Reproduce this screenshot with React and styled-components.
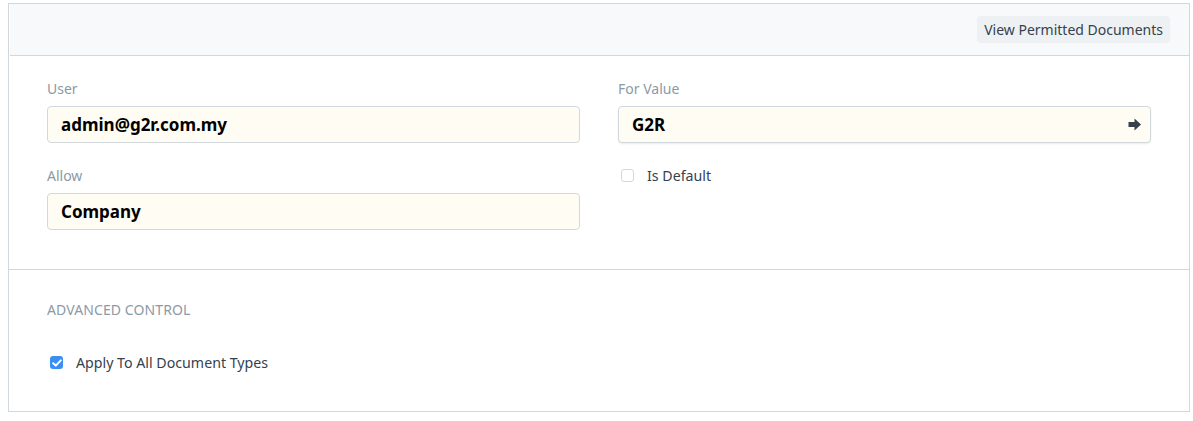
import React from "react";
import styled, { createGlobalStyle } from "styled-components";

const Global = createGlobalStyle`
  html, body { margin: 0; padding: 0; background: #fff; }
  body { font-family: "Noto Sans", "Liberation Sans", sans-serif; color: #36414c; }
`;

const Frame = styled.div`
  margin: 3px 0 0 8px;
  width: 1182px;
  box-sizing: border-box;
  border: 1px solid #d1d8dd;
  background: #fff;
`;

const Header = styled.div`
  height: 52px;
  box-sizing: border-box;
  margin-left: 1px;
  background: #f7f9fb;
  border-bottom: 1px solid #d1d8dd;
  display: flex;
  align-items: center;
  justify-content: flex-end;
  padding: 0 19px 1px 0;
`;

const Button = styled.button`
  height: 27px;
  padding: 0 7px;
  border: none;
  border-radius: 4px;
  background: #eef1f4;
  color: #36414c;
  font-family: "Noto Sans", "Liberation Sans", sans-serif;
  font-size: 14px;
  line-height: 27px;
  cursor: pointer;
`;

const Section = styled.div`
  padding: ${(p) => p.$pad};
  border-bottom: ${(p) => (p.$last ? "none" : "1px solid #d1d8dd")};
`;

const Grid = styled.div`
  display: grid;
  grid-template-columns: 533px 533px;
  column-gap: 38px;
`;

const Column = styled.div`
  display: flex;
  flex-direction: column;
`;

const Field = styled.div`
  display: flex;
  flex-direction: column;
  margin-bottom: ${(p) => p.$mb || "0"};
`;

const Label = styled.div`
  font-size: 14px;
  color: #8d99a6;
  line-height: 20px;
  margin-bottom: 7px;
`;

const InputBox = styled.div`
  height: 37px;
  box-sizing: border-box;
  border: 1px solid #d1d8dd;
  border-radius: 4px;
  background: #fffcf3;
  display: flex;
  align-items: center;
  padding: 0 8px 0 13px;
  font-size: 17px;
  font-weight: 700;
  color: #000;
  box-shadow: ${(p) => (p.$shadow ? "0 1px 2px rgba(0,0,0,0.08)" : "none")};
`;

const InputText = styled.span`
  flex: 1;
`;

const CheckRow = styled.label`
  display: flex;
  align-items: center;
  gap: 13px;
  font-size: 14.2px;
  color: #36414c;
  margin-left: ${(p) => p.$ml || "0"};
`;

const Box = styled.span`
  width: 13px;
  height: 13px;
  box-sizing: border-box;
  border-radius: 3px;
  border: ${(p) => (p.$checked ? "none" : "1px solid #d1d8dd")};
  background: ${(p) => (p.$checked ? "#3b8ef2" : "#fff")};
  display: inline-flex;
  align-items: center;
  justify-content: center;
  flex: none;
`;

const SectionTitle = styled.div`
  font-size: 14px;
  color: #8d99a6;
  text-transform: uppercase;
  letter-spacing: 0.1px;
  line-height: 18px;
  margin-bottom: 34px;
`;

const ArrowIcon = () => (
  <svg width="14" height="13" viewBox="0 0 14 13">
    <path d="M0.5 4 H6.5 V0.5 L13 6.5 L6.5 12.5 V9 H0.5 Z" fill="#36414c" />
  </svg>
);

const Tick = () => (
  <svg width="10" height="8" viewBox="0 0 10 8">
    <path d="M1.2 4.2 L3.8 6.6 L8.8 1.4" fill="none" stroke="#fff" strokeWidth="2" strokeLinecap="round" strokeLinejoin="round" />
  </svg>
);

export default function App() {
  return (
    <>
      <Global />
      <Frame>
        <Header>
          <Button>View Permitted Documents</Button>
        </Header>
        <Section $pad="23px 37px 39px 38px">
          <Grid>
            <Column>
              <Field $mb="23px">
                <Label>User</Label>
                <InputBox><InputText>admin@g2r.com.my</InputText></InputBox>
              </Field>
              <Field>
                <Label>Allow</Label>
                <InputBox><InputText>Company</InputText></InputBox>
              </Field>
            </Column>
            <Column>
              <Field $mb="23px">
                <Label>For Value</Label>
                <InputBox $shadow>
                  <InputText>G2R</InputText>
                  <ArrowIcon />
                </InputBox>
              </Field>
              <CheckRow $ml="3px">
                <Box />
                <span>Is Default</span>
              </CheckRow>
            </Column>
          </Grid>
        </Section>
        <Section $pad="31px 38px 39px 38px" $last>
          <SectionTitle>Advanced Control</SectionTitle>
          <CheckRow $ml="3px">
            <Box $checked><Tick /></Box>
            <span>Apply To All Document Types</span>
          </CheckRow>
        </Section>
      </Frame>
    </>
  );
}
